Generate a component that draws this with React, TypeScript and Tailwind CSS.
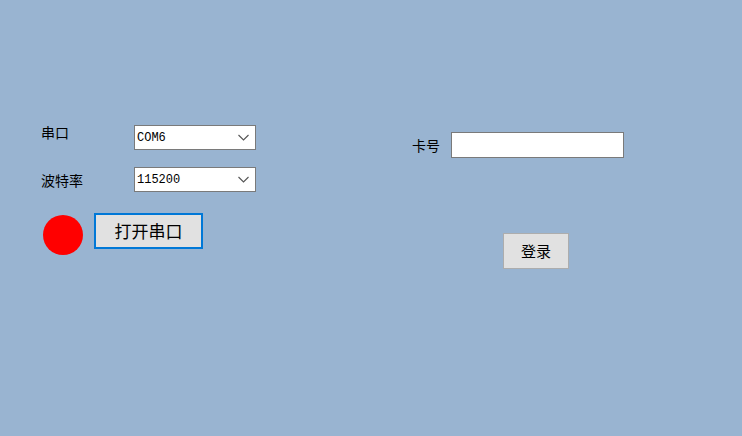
import React from 'react';

const cjk = { fontFamily: '"Noto Sans CJK SC", "Noto Sans", sans-serif' };

const Chevron = () => (
  <svg width="11" height="7" viewBox="0 0 11 7" className="shrink-0">
    <path d="M0.5 1 L5.5 6 L10.5 1" fill="none" stroke="#555" strokeWidth="1.1" />
  </svg>
);

const Combo = ({ value }: { value: string }) => (
  <div className="flex h-[25px] w-[122px] items-center justify-between border border-[#7a7a7a] bg-white pl-[2px] pr-[6px]">
    <span className="text-[12px] leading-none text-black" style={{ fontFamily: '"Liberation Mono", monospace' }}>
      {value}
    </span>
    <Chevron />
  </div>
);

export default function App() {
  return (
    <div className="flex h-[436px] w-full bg-[#99b4d1] text-black" style={cjk}>
      <div className="ml-[41px] mt-[125px] flex w-[215px] flex-col">
        <div className="flex items-start">
          <span className="-mt-[1px] w-[93px] text-[14px] leading-[16px]">串口</span>
          <Combo value="COM6" />
        </div>
        <div className="mt-[17px] flex items-center">
          <span className="w-[93px] text-[14px] leading-[16px]">波特率</span>
          <Combo value="115200" />
        </div>
        <div className="mt-[21px] flex items-start">
          <div className="ml-[2px] mt-[2px] h-[40px] w-[40px] rounded-full bg-[#ff0000]" />
          <button className="ml-[11px] flex h-[36px] w-[109px] items-center justify-center border-2 border-[#0078d7] bg-[#e1e1e1] text-[17px]">
            打开串口
          </button>
        </div>
      </div>
      <div className="ml-[156px] mt-[132px] flex flex-col">
        <div className="flex items-center">
          <span className="w-[39px] text-[14px] leading-[16px]">卡号</span>
          <div className="h-[26px] w-[173px] border border-[#7a7a7a] bg-white" />
        </div>
        <button className="ml-[91px] mt-[75px] flex h-[36px] w-[66px] items-center justify-center border border-[#adadad] bg-[#e1e1e1] text-[15px]">
          登录
        </button>
      </div>
    </div>
  );
}
